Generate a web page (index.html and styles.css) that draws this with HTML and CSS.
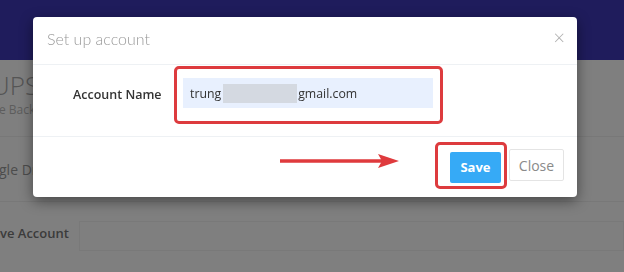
FILE: index.html
```html
<!DOCTYPE html>
<html lang="en">
  <head>
    <title>Set up account</title>
    <link rel="stylesheet" href="styles.css">
  </head>
  <body>
    <div class="page">
      <div class="topbar"></div>
      <div class="content">
        <div class="page-title">UPS</div>
        <div class="page-sub">e Backup</div>
        <div class="row first">
          <span class="row-label light">gle Drive</span>
        </div>
        <div class="row">
          <span class="row-label">ve Account</span>
          <div class="row-input"></div>
        </div>
      </div>
    </div>

    <!-- modal backdrop -->
    <div class="backdrop"></div>

    <div class="modal">
      <div class="modal-header">
        <span class="modal-title">Set up account</span>
        <span class="modal-close">&times;</span>
      </div>
      <div class="modal-body">
        <label for="acc" class="field-label">Account Name</label>
        <div class="mark mark-input">
          <div class="field" id="acc">trung<span class="blur"></span>gmail.com</div>
        </div>
      </div>
      <div class="modal-footer">
        <svg class="arrow" width="120" height="16" viewBox="0 0 120 16">
          <line x1="0" y1="8" x2="104" y2="8" stroke="#df3a3d" stroke-width="3.5" stroke-linecap="round" />
          <path d="M98 1 L119 8 L98 15 L102 8 Z" fill="#df3a3d" />
        </svg>
        <div class="mark mark-save">
          <button class="btn btn-save">Save</button>
        </div>
        <button class="btn btn-close">Close</button>
      </div>
    </div>
  </body>
</html>
```

FILE: styles.css
```css
body {
  margin: 0;
  width: 624px;
  height: 272px;
  overflow: hidden;
  font-family: "Open Sans", "Liberation Sans", sans-serif;
}

/* page behind the modal */
.page {
  background: #ffffff;
  height: 272px;
}
.topbar {
  height: 60px;
  background: #3e39b9;
}
.content {
  padding-top: 8px;
}
.page-title {
  font-size: 26px;
  font-weight: 300;
  color: #aaaaaa;
  margin-left: -9px;
  line-height: 34px;
}
.page-sub {
  font-size: 12px;
  color: #bbbbbb;
  margin-left: -1px;
  line-height: 16px;
}
.row {
  display: flex;
  align-items: center;
  height: 62px;
  border-top: 1px solid #f0f0f0;
}
.row.first {
  margin-top: 18px;
  height: 64px;
}
.row-label {
  font-size: 13px;
  font-weight: 600;
  color: #777777;
  width: 79px;
  flex-shrink: 0;
}
.row-label.light {
  font-size: 14px;
  font-weight: 400;
  color: #999999;
  margin-left: -1px;
}
.row-input {
  flex: 1;
  height: 28px;
  border: 1px solid #f2f2f2;
  margin-top: 6px;
}

.backdrop {
  position: fixed;
  inset: 0;
  background: rgba(0, 0, 0, 0.5);
}

/* modal */
.modal {
  position: absolute;
  left: 33px;
  top: 17px;
  width: 544px;
  height: 180px;
  background: #fff;
  border-radius: 4px;
  box-shadow: 0 4px 14px rgba(0, 0, 0, 0.45);
  display: flex;
  flex-direction: column;
}
.modal-header {
  height: 48px;
  border-bottom: 1px solid #eef1f4;
  display: flex;
  align-items: center;
  justify-content: space-between;
  padding: 0 14px 5px;
  box-sizing: border-box;
}
.modal-title {
  font-family: "Lato", "Open Sans", sans-serif;
  font-size: 16px;
  font-weight: 300;
  color: #9a9a9a;
}
.modal-close {
  font-size: 20px;
  font-weight: 300;
  color: #b0b0b0;
  line-height: 1;
  margin-right: -2px;
}
.modal-body {
  height: 72px;
  border-bottom: 1px solid #eef1f4;
  display: flex;
  align-items: flex-start;
  padding-top: 1px;
  box-sizing: border-box;
}
.field-label {
  width: 141px;
  padding: 20px 0 0 40px;
  box-sizing: border-box;
  font-size: 12.5px;
  font-weight: 600;
  color: #333;
}
.mark {
  border: 3px solid #dd3b3e;
  border-radius: 5px;
}
.mark-input {
  padding: 9px 7px 13px 6px;
}
.field {
  width: 250px;
  height: 30px;
  background: #e8f0fe;
  box-sizing: border-box;
  padding-left: 7px;
  display: flex;
  align-items: center;
  font-size: 12.3px;
  color: #333;
}
.blur {
  display: inline-block;
  width: 74px;
  height: 19px;
  background: #d4d9e1;
  margin: 0 1px 0 2px;
}
.modal-footer {
  flex: 1;
  display: flex;
  align-items: center;
  justify-content: flex-end;
  padding: 0 13px 4px 0;
}
.arrow {
  margin-right: 35px;
  margin-top: -8px;
}
.mark-save {
  padding: 7px 3px 3px 12px;
  margin-right: 2px;
}
.btn {
  font-family: "Open Sans", "Liberation Sans", sans-serif;
  height: 31px;
  border-radius: 2px;
  font-size: 13px;
  cursor: pointer;
}
.btn-save {
  width: 51px;
  border: none;
  background: #36aaf6;
  color: #fff;
  font-weight: 700;
}
.btn-close {
  width: 55px;
  background: #fff;
  border: 1px solid #e4e4e4;
  color: #8a8a8a;
  font-size: 14px;
  height: 32px;
}
```
